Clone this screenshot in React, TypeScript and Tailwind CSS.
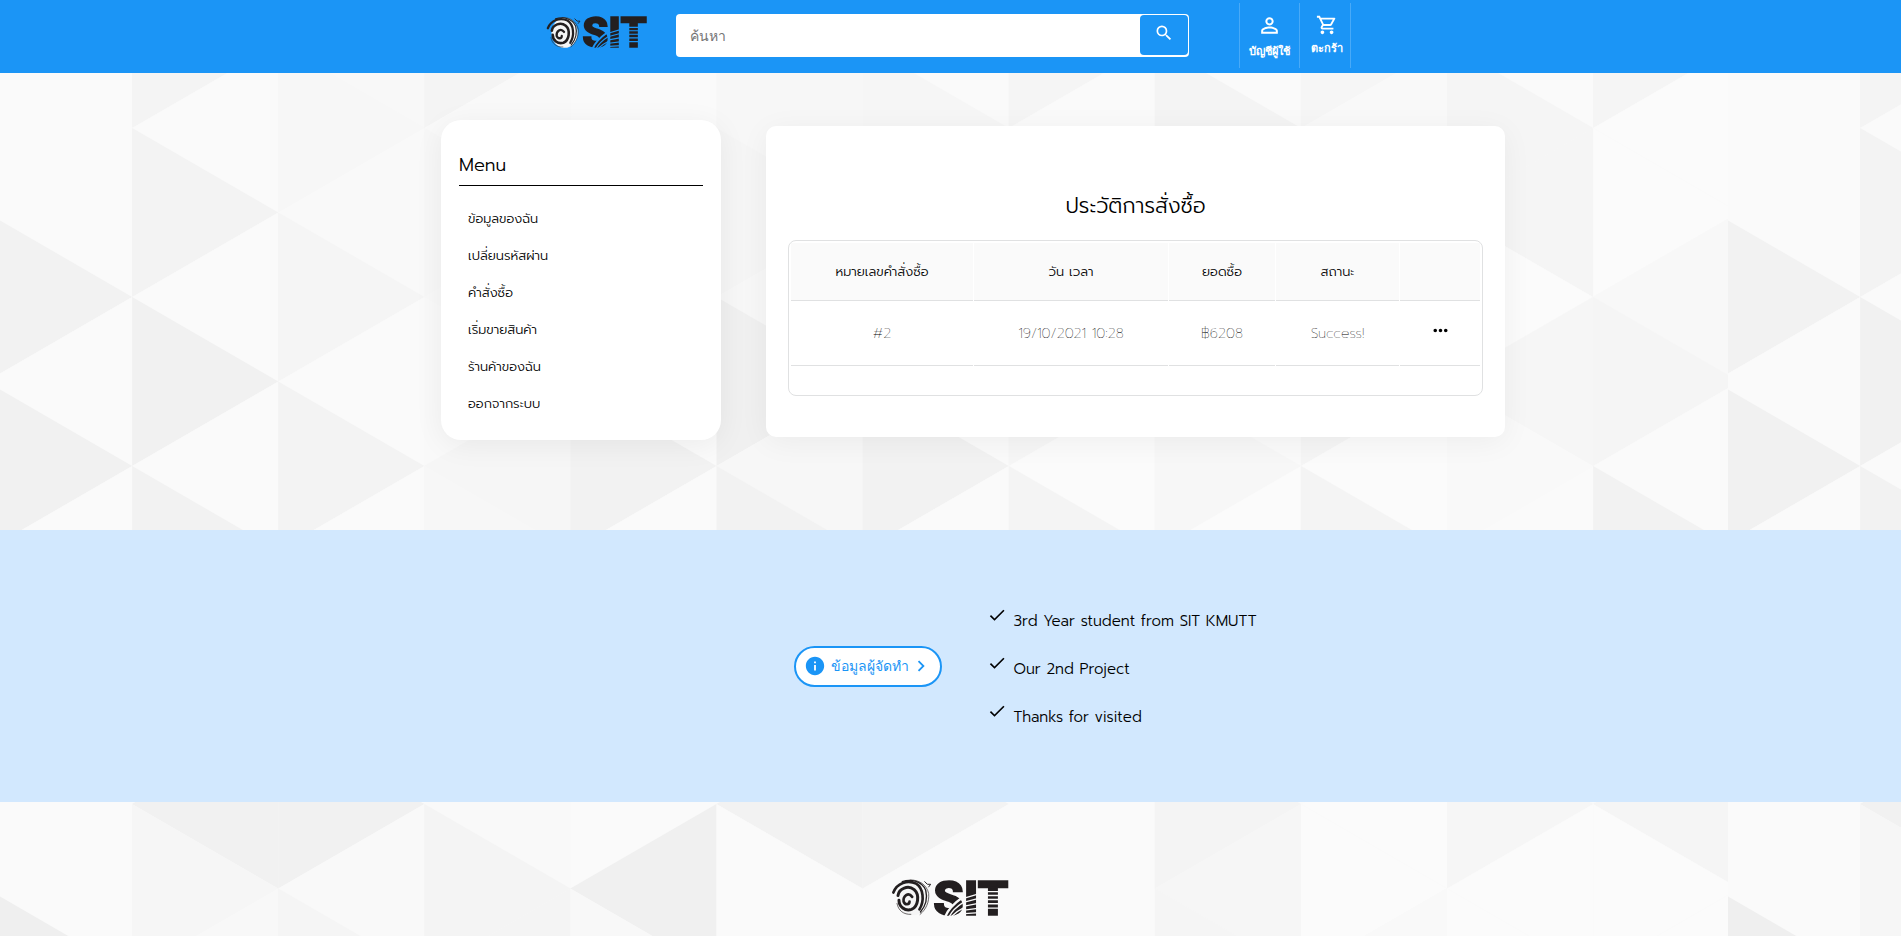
import { useId } from "react";
import { MdOutlineSearch, MdPersonOutline, MdOutlineShoppingCart, MdMoreHoriz, MdInfo, MdChevronRight, MdCheck } from "react-icons/md";

/* One row per vertical strip, twelve triangles from top to bottom, each a grey level. */
const STRIPS = [
  "fa fa fa f2 fa f1 fa fa fa fa fa ef",
  "f4 fa f3 fa f1 fa f2 fa fa f1 f6 f8",
  "f8 f7 f9 f5 fa f3 fa fa fa f1 f9 f5",
  "f4 f9 f7 f8 f9 f6 f7 fa fa f9 f4 f4",
  "fa fa f8 f5 fa f2 fa fa fa fa f0 f8",
  "f7 f7 f5 f7 f0 f7 f2 fa fa f2 fa fa",
  "fa f6 f6 f6 fa f2 fa fa fa f3 fa fa",
  "f5 fa f5 fa f6 fb f4 fa fa fa fa fa",
  "fa f4 fa f4 fa f7 fb fa fa f4 f6 f5",
  "f6 f9 f6 fa f5 fb f4 fa fa fb fb f9",
  "fa f5 f5 fb f6 f9 fa fa fa f6 fb fb",
  "f5 fb fb f8 f5 fa f2 fa fa f5 fb fb",
].map((row) => row.split(" "));

function Backdrop() {
  const id = useId();
  return (
    <svg className="absolute inset-0 -z-10 h-full w-full" aria-hidden="true">
      <defs>
        <pattern id={id} width="1728" height="1014" patternUnits="userSpaceOnUse">
          <rect width="1728" height="1014" fill="#fafafa" />
          {STRIPS.map((row, s) =>
            row.map((g, j) => {
              const x1 = 146.1 * s - 14;
              const x2 = x1 + 146.1;
              const y = 84.5 * j - 41;
              const [edge, apex] = (s + j) % 2 === 1 ? [x1, x2] : [x2, x1];
              return (
                <polygon
                  key={`${s}-${j}`}
                  points={`${edge},${y} ${apex},${y + 84.5} ${edge},${y + 169}`}
                  fill={`#${g}${g}${g}`}
                />
              );
            }),
          )}
        </pattern>
      </defs>
      <rect width="100%" height="100%" fill={`url(#${id})`} />
    </svg>
  );
}

function Logo({ className }: { className: string }) {
  const id = useId();
  return (
    <svg viewBox="0 0 352 112" className={className} overflow="visible" role="img" aria-label="SIT">
      <defs>
        <mask id={id} maskUnits="userSpaceOnUse" x="110" y="-20" width="250" height="150">
          <rect x="110" y="-20" width="250" height="150" fill="#fff" />
          <g stroke="#000" strokeWidth="4" fill="none">
            <path strokeWidth="7" d="M160 114Q172 84 212 56" />
            <path d="M172 114Q184 90 216 70M178 114Q194 98 218 86M184 116Q200 108 218 102" />
            <path d="M218 58L264 44M218 70L264 58M218 82L264 73M218 94L264 88M218 105L264 102" />
            <path d="M286 38H340M286 50H340M286 62H340M286 75H340M286 88H340" />
          </g>
        </mask>
      </defs>
      <ellipse cx="62" cy="57" rx="46" ry="53" fill="#f5f5f5" />
      <g fill="none" stroke="#231f20" strokeLinecap="round">
        <path strokeWidth="8" d="M3 41C14 12 46 2 72 14C94 28 98 66 82 92" />
        <path strokeWidth="4" d="M30 8C58-2 90 8 101 34C107 58 100 82 85 100" />
        <path strokeWidth="2" d="M54 3C82 2 104 18 110 44C112 70 102 92 84 107" />
        <path strokeWidth="9" d="M17 50C20 28 48 18 66 32C84 48 78 84 58 92C38 98 20 84 20 64" />
        <path strokeWidth="8" d="M60 54C48 38 32 52 34 68C38 80 52 78 52 68" />
        <path strokeWidth="2" d="M14 74C18 96 34 108 56 107" />
        <path strokeWidth="3" d="M98 8L106 16L116 16L110 24" />
      </g>
      <text
        x="124"
        y="108"
        fontSize="147"
        mask={`url(#${id})`}
        fill="#231f20"
        stroke="#231f20"
        strokeWidth="5"
        className="font-['Roboto'] font-black"
      >
        SIT
      </text>
    </svg>
  );
}

const MENU = ["ข้อมูลของฉัน", "เปลี่ยนรหัสผ่าน", "คำสั่งซื้อ", "เริ่มขายสินค้า", "ร้านค้าของฉัน", "ออกจากระบบ"];
const COLUMNS = ["หมายเลขคำสั่งซื้อ", "วัน เวลา", "ยอดซื้อ", "สถานะ", ""];
const ORDERS = [{ id: "#2", date: "19/10/2021 10:28", total: "฿6208", status: "Success!" }];
const POINTS = ["3rd Year student from SIT KMUTT", "Our 2nd Project", "Thanks for visited"];

export default function App() {
  return (
    <div className="relative isolate flex min-h-screen flex-col font-['Prompt','Open_Sans','Noto_Sans_Thai',sans-serif] font-light text-black">
      <Backdrop />
      <header className="flex h-[73px] items-start justify-center bg-[#1b95f6] pr-1 font-['Tahoma','Liberation_Sans',sans-serif] font-normal">
        <a href="#home" className="mt-4">
          <Logo className="h-[33px] w-[100px]" />
        </a>
        <form className="mt-[14px] ml-[29px] flex h-[43px] w-[513px] rounded-[4px] bg-white p-px" onSubmit={(e) => e.preventDefault()}>
          <input
            type="search"
            aria-label="ค้นหา"
            placeholder="ค้นหา"
            className="min-w-0 flex-1 bg-transparent px-[13px] text-sm outline-none placeholder:text-[#757575]"
          />
          <button type="submit" aria-label="Search" className="flex h-[40px] w-[48px] justify-center rounded-[4px] bg-[#1b95f6] pt-2 text-white">
            <MdOutlineSearch className="size-5" />
          </button>
        </form>
        <nav className="ml-[50px] flex text-[11px] leading-4 font-semibold text-white">
          <a href="#account" className="mt-[3px] flex h-[65px] w-[60px] flex-col items-center border-l border-[#48aaf8] pt-[10px] whitespace-nowrap">
            <MdPersonOutline className="size-[25px]" />
            <span className="mt-[5px]">บัญชีผู้ใช้</span>
          </a>
          <a href="#cart" className="mt-[3px] flex h-[65px] w-[52px] flex-col items-center border-x border-[#48aaf8] pt-[11px] pl-1 whitespace-nowrap">
            <MdOutlineShoppingCart className="size-[22px]" />
            <span className="mt-1">ตะกร้า</span>
          </a>
        </nav>
      </header>

      <main className="flex min-h-[457px] items-start justify-center pl-[45px]">
        <aside className="mt-[47px] h-[320px] w-[280px] shrink-0 rounded-[20px] bg-white px-[18px] pt-8 shadow-[0_5px_30px_rgba(0,0,0,0.06)]">
          <h2 className="border-b border-black pb-[6px] text-lg leading-[27px]">Menu</h2>
          <ul className="mt-[14px] px-[9px] text-[13px] leading-[37px]">
            {MENU.map((label) => (
              <li key={label}>
                <a href="#menu">{label}</a>
              </li>
            ))}
          </ul>
        </aside>

        <section className="mt-[53px] ml-[45px] w-[739px] rounded-[10px] bg-white px-[22px] pt-[62px] pb-[41px] shadow-[0_5px_30px_rgba(0,0,0,0.05)]">
          <h1 className="text-center text-[21px] leading-9">ประวัติการสั่งซื้อ</h1>
          <div className="mt-4 rounded-lg border border-[#e0e1e2] p-px pb-[28px]">
            <table className="w-full table-fixed border-separate border-spacing-px text-center">
              <colgroup>
                <col className="w-[182px]" />
                <col className="w-[194px]" />
                <col className="w-[106px]" />
                <col className="w-[123px]" />
                <col />
              </colgroup>
              <thead>
                <tr>
                  {COLUMNS.map((c, i) => (
                    <th key={i} className="h-[58px] border-b border-[#e0e1e2] bg-[#fafafa] text-[13px] font-light text-black">
                      {c}
                    </th>
                  ))}
                </tr>
              </thead>
              <tbody>
                {ORDERS.map((o) => (
                  <tr key={o.id} className="text-sm font-extralight text-black">
                    {[o.id, o.date, o.total, o.status].map((v) => (
                      <td key={v} className="h-[64px] border-b border-[#e0e1e2]">
                        {v}
                      </td>
                    ))}
                    <td className="border-b border-[#e0e1e2]">
                      <button type="button" aria-label="Details" className="mb-[6px] block w-full text-black">
                        <MdMoreHoriz className="mx-auto size-[21px]" />
                      </button>
                    </td>
                  </tr>
                ))}
              </tbody>
            </table>
          </div>
        </section>
      </main>

      <section className="grid h-[272px] grid-cols-2 items-center bg-[#d2e8fe]">
        <div className="flex justify-end pr-[9px]">
          <button type="button" className="flex h-[41px] w-[148px] items-center rounded-full border-2 border-[#1b95f6] bg-white pl-2 font-['Tahoma','Liberation_Sans',sans-serif] text-sm font-normal whitespace-nowrap text-[#1b95f6]">
            <MdInfo className="size-[22px] shrink-0" />
            <span className="ml-1 w-[80px]">ข้อมูลผู้จัดทำ</span>
            <MdChevronRight className="size-[22px] shrink-0" />
          </button>
        </div>
        <ul className="pt-[5px] pl-9 text-[15px] leading-[48px]">
          {POINTS.map((p) => (
            <li key={p} className="flex">
              <MdCheck className="mt-2 mr-[7px] size-[20px] shrink-0" />
              {p}
            </li>
          ))}
        </ul>
      </section>

      <footer className="flex flex-1 justify-center pt-[77px] pb-[20px]">
        <Logo className="h-[37px] w-[117px]" />
      </footer>
    </div>
  );
}
